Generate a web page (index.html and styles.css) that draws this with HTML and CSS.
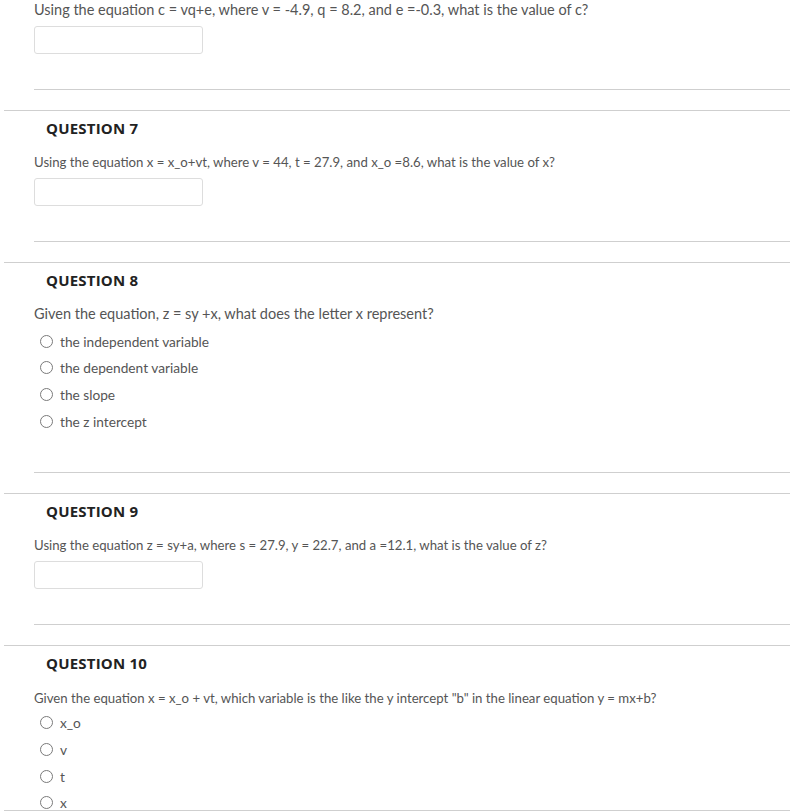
FILE: index.html
```html
<!DOCTYPE html>
<html>
<head>
<meta charset="utf-8">
<link rel="stylesheet" href="styles.css">
</head>
<body>
<div class="page">
  <div class="body-area first">
    <div class="q-text big">Using the equation c = vq+e, where v = -4.9, q = 8.2, and e =-0.3, what is the value of c?</div>
    <div class="answer-input"></div>
  </div>

  <div class="question">
    <div class="q-head">QUESTION 7</div>
    <div class="body-area">
      <div class="q-text">Using the equation x = x_o+vt, where v = 44, t = 27.9, and x_o =8.6, what is the value of x?</div>
      <div class="answer-input"></div>
    </div>
  </div>

  <div class="question">
    <div class="q-head">QUESTION 8</div>
    <div class="body-area choices-area">
      <div class="q-text big">Given the equation, z = sy +x, what does the letter x represent?</div>
      <div class="options">
        <div class="option"><span class="radio"></span><span>the independent variable</span></div>
        <div class="option"><span class="radio"></span><span>the dependent variable</span></div>
        <div class="option"><span class="radio"></span><span>the slope</span></div>
        <div class="option"><span class="radio"></span><span>the z intercept</span></div>
      </div>
    </div>
  </div>

  <div class="question">
    <div class="q-head">QUESTION 9</div>
    <div class="body-area">
      <div class="q-text">Using the equation z = sy+a, where s = 27.9, y = 22.7, and a =12.1, what is the value of z?</div>
      <div class="answer-input"></div>
    </div>
  </div>

  <div class="question">
    <div class="q-head">QUESTION 10</div>
    <div class="body-area last">
      <div class="q-text">Given the equation x = x_o + vt, which variable is the like the y intercept "b" in the linear equation y = mx+b?</div>
      <div class="options">
        <div class="option"><span class="radio"></span><span>x_o</span></div>
        <div class="option"><span class="radio"></span><span>v</span></div>
        <div class="option"><span class="radio"></span><span>t</span></div>
        <div class="option"><span class="radio"></span><span>x</span></div>
      </div>
    </div>
  </div>
</div>
<div class="bottom-rule"></div>
</body>
</html>
```

FILE: styles.css
```css
html, body {
  margin: 0;
  padding: 0;
  background: #fff;
}

body {
  font-family: Lato, "Open Sans", sans-serif;
  color: #555;
  overflow: hidden;
}

.page {
  width: 790px;
}

.question {
  margin-left: 4px;
  border-top: 1px solid #cfcfcf;
  margin-top: 20px;
}

.q-head {
  font-family: "Open Sans", sans-serif;
  font-weight: 700;
  font-size: 15px;
  line-height: 20px;
  color: #222;
  padding: 7px 0 0 42px;
  letter-spacing: 0.2px;
}

.body-area {
  margin-left: 30px;
  padding-bottom: 35px;
  border-bottom: 1px solid #cfcfcf;
}

.body-area.first {
  margin-left: 34px;
}

.q-head + .body-area {
  margin-top: 14px;
}

.q-text {
  font-size: 13.2px;
  line-height: 20px;
  color: #555;
  white-space: nowrap;
}

.q-text.big {
  font-size: 14.5px;
}

.answer-input {
  margin-top: 6px;
  width: 167px;
  height: 26px;
  border: 1px solid #ddd;
  border-radius: 3px;
  background: #fff;
}

.options {
  margin-top: 4px;
}

.body-area.last .options {
  margin-top: 2px;
}

.option {
  height: 26.67px;
  display: flex;
  align-items: center;
  gap: 7px;
  padding-left: 6px;
  font-size: 13.7px;
  color: #555;
}

.radio {
  width: 11px;
  height: 11px;
  border: 1px solid #7a7a7a;
  border-radius: 50%;
  flex: none;
}

.choices-area {
  padding-bottom: 37px;
}

.body-area.last {
  border-bottom: none;
  padding-bottom: 0;
}

.q-head + .body-area.last {
  margin-top: 15px;
}

.bottom-rule {
  position: fixed;
  left: 4px;
  right: 0;
  top: 810px;
  height: 1px;
  background: #cfcfcf;
}
```
